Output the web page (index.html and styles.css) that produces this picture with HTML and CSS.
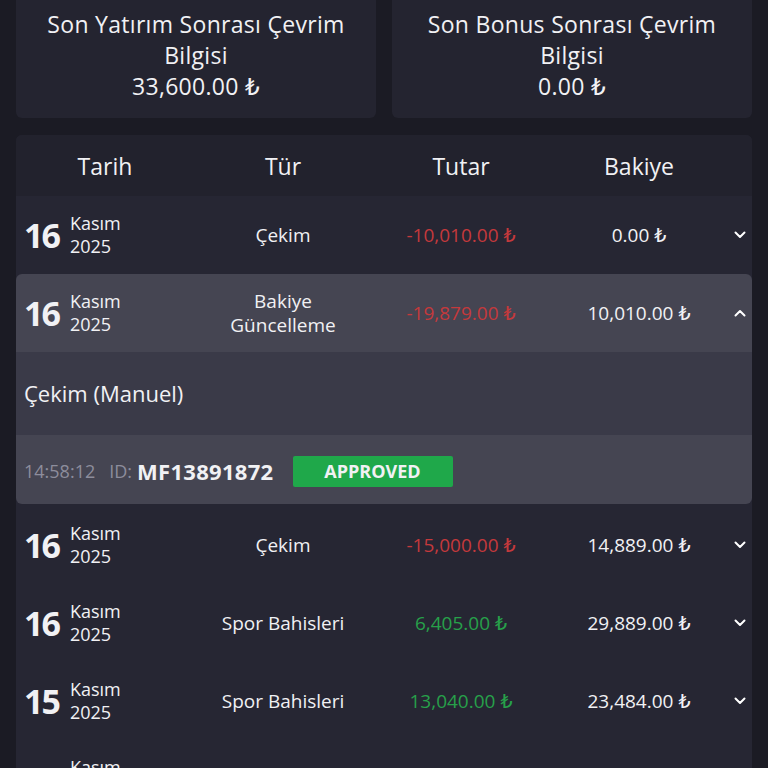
FILE: index.html
```html
<!DOCTYPE html>
<html lang="tr">
<head>
    <meta charset="UTF-8">
    <meta name="viewport" content="width=device-width, initial-scale=1.0">
    <title>Hesap Geçmişi</title>
    <link rel="stylesheet" href="styles.css">
</head>
<body>

    <div class="summary">
        <div class="summary-card">
            <div>Son Yatırım Sonrası Çevrim</div>
            <div>Bilgisi</div>
            <div>33,600.00 ₺</div>
        </div>
        <div class="summary-card">
            <div>Son Bonus Sonrası Çevrim</div>
            <div>Bilgisi</div>
            <div>0.00 ₺</div>
        </div>
    </div>

    <div class="history">
        <div class="row head">
            <div>Tarih</div>
            <div>Tür</div>
            <div>Tutar</div>
            <div>Bakiye</div>
            <div></div>
        </div>

        <div class="row">
            <div class="date"><span class="day">16</span><span class="month">Kasım<br>2025</span></div>
            <div>Çekim</div>
            <div class="neg">-10,010.00 ₺</div>
            <div>0.00 ₺</div>
            <div class="chev"><svg viewBox="0 0 12 8"><path d="M1.5 1.5 6 6l4.5-4.5"/></svg></div>
        </div>

        <div class="open">
            <div class="row active">
                <div class="date"><span class="day">16</span><span class="month">Kasım<br>2025</span></div>
                <div>Bakiye<br>Güncelleme</div>
                <div class="neg">-19,879.00 ₺</div>
                <div>10,010.00 ₺</div>
                <div class="chev"><svg viewBox="0 0 12 8"><path d="M1.5 6.5 6 2l4.5 4.5"/></svg></div>
            </div>
            <div class="detail-title">Çekim (Manuel)</div>
            <div class="detail-info">
                <span class="muted">14:58:12</span>
                <span class="muted id-label">ID:</span>
                <span class="tx-id">MF13891872</span>
                <span class="badge">APPROVED</span>
            </div>
        </div>

        <div class="row">
            <div class="date"><span class="day">16</span><span class="month">Kasım<br>2025</span></div>
            <div>Çekim</div>
            <div class="neg">-15,000.00 ₺</div>
            <div>14,889.00 ₺</div>
            <div class="chev"><svg viewBox="0 0 12 8"><path d="M1.5 1.5 6 6l4.5-4.5"/></svg></div>
        </div>

        <div class="row">
            <div class="date"><span class="day">16</span><span class="month">Kasım<br>2025</span></div>
            <div>Spor Bahisleri</div>
            <div class="pos">6,405.00 ₺</div>
            <div>29,889.00 ₺</div>
            <div class="chev"><svg viewBox="0 0 12 8"><path d="M1.5 1.5 6 6l4.5-4.5"/></svg></div>
        </div>

        <div class="row">
            <div class="date"><span class="day">15</span><span class="month">Kasım<br>2025</span></div>
            <div>Spor Bahisleri</div>
            <div class="pos">13,040.00 ₺</div>
            <div>23,484.00 ₺</div>
            <div class="chev"><svg viewBox="0 0 12 8"><path d="M1.5 1.5 6 6l4.5-4.5"/></svg></div>
        </div>

        <div class="row">
            <div class="date"><span class="day">15</span><span class="month">Kasım<br>2025</span></div>
            <div>Spor Bahisleri</div>
            <div class="pos">1,000.00 ₺</div>
            <div>10,444.00 ₺</div>
            <div class="chev"><svg viewBox="0 0 12 8"><path d="M1.5 1.5 6 6l4.5-4.5"/></svg></div>
        </div>
    </div>

</body>
</html>
```

FILE: styles.css
```css
body {
    margin: 0;
    padding: 0 16px;
    background-color: #1b1b24;
    color: #f1f1f4;
    font-family: "Open Sans", "DejaVu Sans", sans-serif;
    overflow: hidden;
}
.summary {
    display: grid;
    grid-template-columns: 1fr 1fr;
    gap: 16px;
}
.summary-card {
    background-color: #242430;
    border-radius: 0 0 6px 6px;
    padding: 9px 8px 16px;
    text-align: center;
    font-size: 23px;
    line-height: 31px;
    letter-spacing: 0.3px;
}
.history {
    margin-top: 17px;
    background-color: #262633;
    border-radius: 6px 6px 0 0;
}
.row {
    display: grid;
    grid-template-columns: 178px 178px 178px 178px 1fr;
    align-items: center;
    height: 78px;
    text-align: center;
    font-size: 19px;
    line-height: 24px;
}
.row.head {
    height: 61px;
    background-color: #22222d;
    border-radius: 6px 6px 0 0;
    font-size: 23px;
    font-weight: 500;
}
.date {
    display: flex;
    align-items: center;
    gap: 11px;
    padding-left: 8px;
    text-align: left;
}
.day {
    font-size: 34px;
    font-weight: 700;
    line-height: 1;
    letter-spacing: -2px;
}
.month {
    font-size: 18px;
    line-height: 23px;
}
.neg {
    color: #c4393c;
}
.pos {
    color: #27a04a;
}
.chev svg {
    display: block;
    width: 12px;
    height: 8px;
    margin-left: 6px;
    fill: none;
    stroke: #ffffff;
    stroke-width: 2;
    stroke-linecap: round;
    stroke-linejoin: round;
}
.open {
    margin-bottom: 2px;
}
.row.active {
    background-color: #454552;
    border-radius: 6px 6px 0 0;
}
.detail-title {
    background-color: #3a3a48;
    height: 83px;
    display: flex;
    align-items: center;
    padding-left: 8px;
    font-size: 22px;
    padding-bottom: 2px;
    box-sizing: border-box;
}
.detail-info {
    background-color: #454552;
    border-radius: 0 0 6px 6px;
    height: 69px;
    display: flex;
    align-items: center;
    padding-left: 8px;
    padding-top: 3px;
    box-sizing: border-box;
    font-size: 18px;
}
.muted {
    color: #8d8d9c;
}
.id-label {
    margin-left: 14px;
}
.tx-id {
    margin-left: 5px;
    font-size: 22px;
    font-weight: 700;
    letter-spacing: 0.3px;
}
.badge {
    margin-left: 19px;
    width: 160px;
    height: 31px;
    line-height: 31px;
    text-align: center;
    background-color: #1fa84a;
    border-radius: 2px;
    font-size: 18px;
    font-weight: 700;
}
```
